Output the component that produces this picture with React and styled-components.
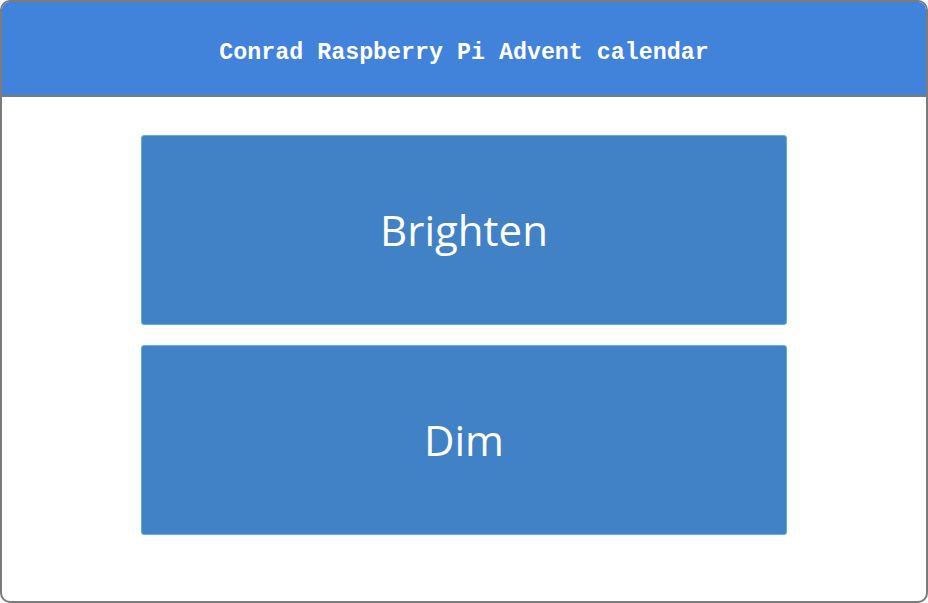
import React from 'react';
import styled, { createGlobalStyle } from 'styled-components'

const Global = createGlobalStyle`
	html, body{
		margin: 0;
		padding: 0;
		background: #fff;
	}
	*{ box-sizing: border-box; }
`

const Frame = styled.div`
	width: 928px;
	height: 603px;
	border: 2px solid #7b7b7b;
	border-radius: 10px;
	overflow: hidden;
	display: flex;
	flex-direction: column;
	background: #fff;
`

const Header = styled.header`
	height: 95px;
	flex: none;
	background: #4182db;
	border-bottom: 2px solid #7b7b7b;
	display: flex;
	align-items: center;
	justify-content: center;
	padding-top: 8px;
	color: #fff;
	font-family: "Liberation Mono", "Courier New", monospace;
	font-weight: 700;
	font-size: 23.3px;
`

const Content = styled.main`
	flex: 1;
	display: flex;
	flex-direction: column;
	align-items: center;
	gap: 20px;
	padding-top: 38px;
`

const Button = styled.button`
	width: 646px;
	height: 190px;
	flex: none;
	background: #4181c6;
	border: 1px solid #58b8c4;
	border-radius: 3px;
	color: #fff;
	font-family: "Open Sans", "Noto Sans", sans-serif;
	font-size: 42px;
	cursor: pointer;
	padding: 0;
	padding-bottom: 2px;
`

export default function App(){
	return <>
		<Global/>
		<Frame>
			<Header>Conrad Raspberry Pi Advent calendar</Header>
			<Content>
				<Button>Brighten</Button>
				<Button>Dim</Button>
			</Content>
		</Frame>
	</>
}
